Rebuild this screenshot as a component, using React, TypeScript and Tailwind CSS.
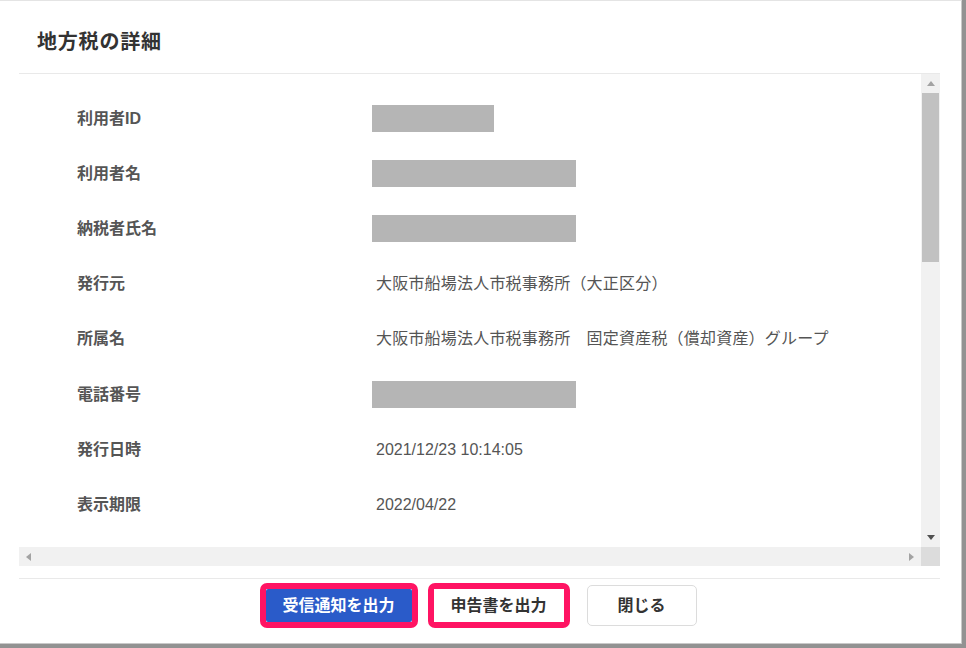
import React from "react";

const rows: { label: string; value?: string; mask?: number; cjk?: boolean }[] = [
  { label: "利用者ID", mask: 122 },
  { label: "利用者名", mask: 204 },
  { label: "納税者氏名", mask: 204 },
  { label: "発行元", value: "大阪市船場法人市税事務所（大正区分）", cjk: true },
  { label: "所属名", value: "大阪市船場法人市税事務所　固定資産税（償却資産）グループ", cjk: true },
  { label: "電話番号", mask: 204 },
  { label: "発行日時", value: "2021/12/23 10:14:05" },
  { label: "表示期限", value: "2022/04/22" },
];

const font = { fontFamily: '"Liberation Sans", "Noto Sans CJK JP", sans-serif' };

export default function App() {
  return (
    <div className="w-[966px] h-[648px] bg-[#929292] overflow-hidden" style={font}>
      <div className="w-[962px] h-[644px] bg-white border-t border-[#e4e4e4] border-r border-b border-r-[#c9c9c9] border-b-[#c9c9c9] flex flex-col">
        {/* header */}
        <div className="h-[72px] pt-[10px] pl-[37px] flex items-center">
          <h1 className="text-[20px] font-bold text-[#333] tracking-[0.8px]">地方税の詳細</h1>
        </div>

        {/* scroll box */}
        <div className="ml-[19px] w-[921px] border-t border-[#e9e9e9] flex flex-col">
          <div className="flex h-[473px]">
            <div className="flex-1 overflow-hidden pt-[17px] pl-[58px]">
              {rows.map((r) => (
                <div key={r.label} className="h-[55.2px] flex items-center">
                  <div className="w-[295px] text-[16px] font-bold text-[#555]">{r.label}</div>
                  {r.mask ? (
                    <div className="h-[27px] bg-[#b5b5b5]" style={{ width: r.mask }} />
                  ) : r.cjk ? (
                    <div className="pl-[4px] text-[16px] text-[#555] whitespace-nowrap tracking-[0.2px]">{r.value}</div>
                  ) : (
                    <div className="pl-[4px] text-[16px] text-[#555] whitespace-nowrap">{r.value}</div>
                  )}
                </div>
              ))}
            </div>
            {/* vertical scrollbar */}
            <div className="w-[19px] bg-[#f1f1f1] flex flex-col items-center">
              <div className="h-[19px] w-full flex items-center justify-center">
                <svg width="8" height="5" viewBox="0 0 8 5">
                  <path d="M0 5 L4 0 L8 5 Z" fill="#a3a3a3" />
                </svg>
              </div>
              <div className="w-[17px] h-[169px] bg-[#c1c1c1]" />
              <div className="flex-1" />
              <div className="h-[19px] w-full flex items-center justify-center">
                <svg width="8" height="5" viewBox="0 0 8 5">
                  <path d="M0 0 L8 0 L4 5 Z" fill="#505050" />
                </svg>
              </div>
            </div>
          </div>
          {/* horizontal scrollbar */}
          <div className="flex h-[19px]">
            <div className="flex-1 bg-[#f1f1f1] flex items-center justify-between px-[7px]">
              <svg width="5" height="8" viewBox="0 0 5 8">
                <path d="M5 0 L5 8 L0 4 Z" fill="#a3a3a3" />
              </svg>
              <svg width="5" height="8" viewBox="0 0 5 8">
                <path d="M0 0 L5 4 L0 8 Z" fill="#a3a3a3" />
              </svg>
            </div>
            <div className="w-[19px] bg-[#dcdcdc]" />
          </div>
        </div>

        {/* divider */}
        <div className="ml-[19px] w-[921px] mt-[12px] border-t border-[#e9e9e9]" />

        {/* buttons */}
        <div className="ml-[19px] w-[921px] flex justify-center items-start pt-[4px] pr-[3px]">
          <div className="border-[6px] border-[#ff1463] rounded-[7px]">
            <div className="w-[146px] h-[33px] bg-[#2a5bc9] flex items-center justify-center text-white text-[16px] font-bold rounded-[2px]">
              受信通知を出力
            </div>
          </div>
          <div className="ml-[10px] border-[6px] border-[#ff1463] rounded-[7px]">
            <div className="w-[130px] h-[33px] bg-white flex items-center justify-center text-[#333] text-[16px] font-bold">
              申告書を出力
            </div>
          </div>
          <div className="ml-[17px] mt-[2px] w-[110px] h-[41px] border border-[#dcdcdc] rounded-[5px] bg-white flex items-center justify-center text-[#333] text-[16px] font-bold">
            閉じる
          </div>
        </div>
      </div>
    </div>
  );
}
